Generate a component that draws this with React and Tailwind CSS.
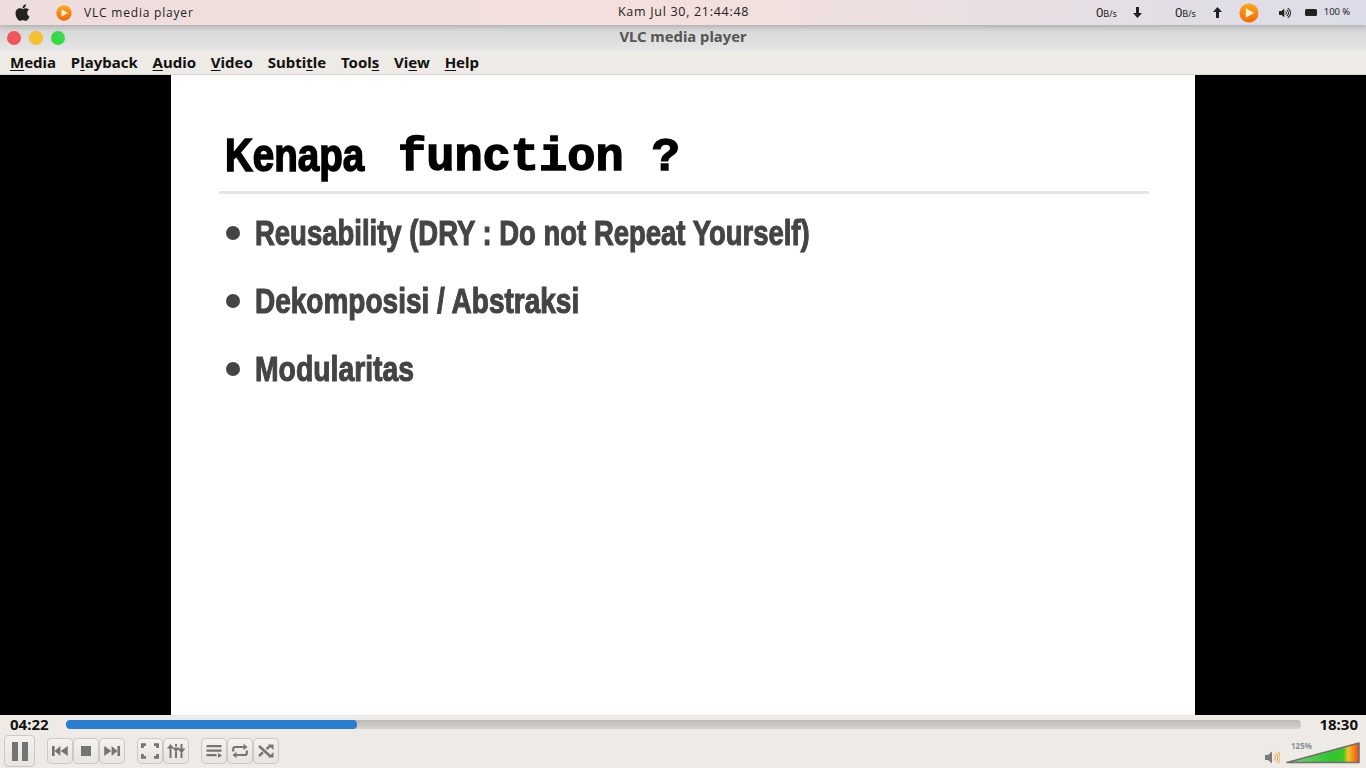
import React from "react";
import { FaApple, FaVolumeUp } from "react-icons/fa";

const sans = "[font-family:'Noto_Sans','Liberation_Sans',sans-serif]";

function PlayLogo({ size = 16 }) {
  return (
    <svg width={size} height={size} viewBox="0 0 20 20">
      <defs>
        <linearGradient id={"pl" + size} x1="0" y1="0" x2="0" y2="1">
          <stop offset="0" stopColor="#ffa81e" />
          <stop offset="1" stopColor="#f26a05" />
        </linearGradient>
      </defs>
      <circle cx="10" cy="10" r="9.6" fill={"url(#pl" + size + ")"} />
      <path d="M6.8 5.2 L15 10 L6.8 14.8 Z" fill="#fff3dc" />
    </svg>
  );
}

function Btn({ children, w = "w-[26px]", h = "h-[26px]" }) {
  return (
    <div className={`${w} ${h} shrink-0 flex items-center justify-center rounded-[4px] border border-[#cdc9c4] bg-gradient-to-b from-[#f4f2ee] to-[#e8e5e1]`}>
      {children}
    </div>
  );
}

const ic = { width: 18, height: 18, viewBox: "0 0 18 18", fill: "#747474", className: "blur-[0.3px]" };

const Prev = () => <svg {...ic}><path d="M1 4h2.6v10H1zM9.4 4v10L3.6 9zM16.8 4v10L9.6 9z" /></svg>;
const Stop = () => <svg {...ic}><rect x="4" y="4" width="10" height="10" /></svg>;
const Next = () => <svg {...ic}><path d="M14.4 4H17v10h-2.6zM8.6 4v10l5.8-5zM1.2 4v10L8.4 9z" /></svg>;
const Full = () => (
  <svg {...ic} fill="none" stroke="#747474" strokeWidth="2.8">
    <path d="M1.4 6v-3.4h3.6M13 2.6h3.6V6M16.6 12v3.4H13M5 15.4H1.4V12" />
  </svg>
);
const Ext = () => (
  <svg {...ic}>
    <path d="M2.5 6h2v10h-2zM8 2h2v2.5H8zM8 10h2v6H8zM13.5 2h2v5h-2zM13.5 11h2v5h-2zM0 6.5L3.5 2 7 6.5zM5.5 5.5h7L9 10.5zM10.5 6.5h8l-4 5z" />
  </svg>
);
const List = () => (
  <svg {...ic}>
    <path d="M1.5 3h15v2.2h-15zM1.5 7.5h15v2.2h-15zM1.5 12h10v2.2h-10zM13 11l4 2.5-4 2.5z" />
  </svg>
);
const Loop = () => (
  <svg {...ic} fill="none" stroke="#747474" strokeWidth="2.2">
    <path d="M2.2 9.5V7a2 2 0 0 1 2-2h8.5" />
    <path d="M15.8 8.5V11a2 2 0 0 1-2 2H5.3" />
    <path d="M12.5 1.8l4 3.2-4 3.2z" fill="#747474" stroke="none" />
    <path d="M5.5 9.8l-4 3.2 4 3.2z" fill="#747474" stroke="none" />
  </svg>
);
const Rand = () => (
  <svg {...ic} fill="none" stroke="#747474" strokeWidth="2.4">
    <path d="M2 4l11 10M2 14l4-3.6M9.5 7.2L13 4" />
    <path d="M16.5 2.5v5.5l-5.5-5.5zM16.5 15.5V10l-5.5 5.5z" fill="#747474" stroke="none" />
  </svg>
);

const ArrowD = () => <svg width="9" height="11" viewBox="0 0 9 11" fill="#222"><path d="M3 0h3v6h3L4.5 11 0 6h3z" /></svg>;
const ArrowU = () => <svg width="9" height="11" viewBox="0 0 9 11" fill="#222"><path d="M3 11h3V5h3L4.5 0 0 5h3z" /></svg>;

function Menu({ pre, u, post }) {
  return (
    <span className="text-[15px] font-bold leading-[20px] text-[#111]">
      {pre}<span className="underline underline-offset-2">{u}</span>{post}
    </span>
  );
}

function Bullet({ children, w }) {
  return (
    <div className="flex items-center h-[68px]">
      <div className="w-[14px] h-[14px] rounded-full bg-[#444] ml-[7px] mr-[15px] shrink-0 blur-[0.4px]" />
      <span className={`inline-block origin-left whitespace-nowrap text-[35px] font-bold text-[#444] [font-family:'Liberation_Sans',sans-serif] blur-[0.5px] [-webkit-text-stroke:1.1px_#444] ${w}`}>
        {children}
      </span>
    </div>
  );
}

export default function App() {
  return (
    <div className={`w-[1366px] h-[768px] overflow-hidden flex flex-col bg-[#eeebe6] ${sans}`}>
      {/* system bar */}
      <div className="h-[25px] shrink-0 flex items-center bg-gradient-to-r from-[#eedddd] via-[#f3e0dc] to-[#dcdde9] text-[#222] relative z-10 shadow-[0_2px_5px_rgba(0,0,0,0.18)]">
        <div className="w-[618px] shrink-0 flex items-center">
          <FaApple className="ml-[13px] text-[#222]" size={19} />
          <div className="ml-[24px]"><PlayLogo size={16} /></div>
          <span className="ml-[12px] text-[12px] tracking-[0.8px] [font-family:'Open_Sans',sans-serif]">VLC media player</span>
        </div>
        <div className="text-[12.5px] tracking-[0.7px] whitespace-nowrap [font-family:'Open_Sans',sans-serif]">Kam Jul 30, 21:44:48</div>
        <div className="flex-1 flex items-center justify-end pr-[16px] text-[#222]">
          <span className="text-[13px] whitespace-nowrap">0<span className="text-[9px]">B/s</span></span>
          <div className="ml-[16px]"><ArrowD /></div>
          <span className="ml-[33px] text-[13px] whitespace-nowrap">0<span className="text-[9px]">B/s</span></span>
          <div className="ml-[17px]"><ArrowU /></div>
          <div className="ml-[17px]"><PlayLogo size={20} /></div>
          <FaVolumeUp size={12} className="ml-[20px]" />
          <div className="ml-[14px] w-[12px] h-[7px] bg-[#222] rounded-[1.5px]" />
          <span className="ml-[7px] text-[9.5px] tracking-[-0.1px] whitespace-nowrap">100 %</span>
        </div>
      </div>
      {/* title bar */}
      <div className="h-[26px] shrink-0 flex items-center relative bg-gradient-to-b from-[#d4d4d4] to-[#e6e6e6]">
        <div className="flex items-center gap-[8px] pl-[7px]">
          <div className="w-[14px] h-[14px] rounded-full bg-[#f2545b]" />
          <div className="w-[14px] h-[14px] rounded-full bg-[#f7c02f]" />
          <div className="w-[14px] h-[14px] rounded-full bg-[#35d94a]" />
        </div>
        <div className="absolute inset-0 pb-[3px] flex items-center justify-center text-[14.8px] font-bold text-[#555]">VLC media player</div>
      </div>
      {/* menu bar */}
      <div className="h-[24px] shrink-0 flex items-center gap-[14.8px] pl-[10px] pb-[2px] bg-[#eeebe6] border-b border-[#d9d6d1]">
        <Menu pre="" u="M" post="edia" />
        <Menu pre="P" u="l" post="ayback" />
        <Menu pre="" u="A" post="udio" />
        <Menu pre="" u="V" post="ideo" />
        <Menu pre="Subti" u="t" post="le" />
        <Menu pre="Tool" u="s" post="" />
        <Menu pre="Vi" u="e" post="w" />
        <Menu pre="" u="H" post="elp" />
      </div>
      {/* video */}
      <div className="h-[640px] shrink-0 bg-black flex justify-center">
        <div className="w-[1024px] h-full bg-white flex flex-col pl-[48px] pr-[46px] pt-[50px]">
          <div className="h-[66px] flex items-end pb-[6px] pl-[6px] text-black whitespace-nowrap blur-[0.4px]">
            <span className="inline-block origin-left scale-x-[0.82] mb-[2px] w-[140px] text-[47px] leading-[56px] font-bold [font-family:'Liberation_Sans',sans-serif] [-webkit-text-stroke:1.6px_#000]">Kenapa</span>
            <span className="ml-[33px] -mb-[1px] text-[47px] leading-[56px] font-bold [font-family:'Liberation_Mono',monospace] [-webkit-text-stroke:1.4px_#000]">function ?</span>
          </div>
          <div className="h-[3px] bg-[#e4e4e4]" />
          <div className="mt-[5px]">
            <Bullet w="scale-x-[0.785]">Reusability (DRY : Do not Repeat Yourself)</Bullet>
            <Bullet w="scale-x-[0.8]">Dekomposisi / Abstraksi</Bullet>
            <Bullet w="scale-x-[0.81]">Modularitas</Bullet>
          </div>
        </div>
      </div>
      {/* controls */}
      <div className="flex-1 flex flex-col bg-[#eeebe6]">
        <div className="h-[20px] flex items-center pl-[10px] pr-[8px] pb-[2px]">
          <span className="w-[56px] text-[15px] font-bold text-[#111]">04:22</span>
          <div className="w-[1235px] h-[9px] rounded-[4px] bg-gradient-to-b from-[#bdbab5] to-[#d6d3ce] overflow-hidden">
            <div className="w-[291px] h-full rounded-[4px] bg-[#2b7cd3]" />
          </div>
          <span className="ml-auto text-[15px] font-bold text-[#111]">18:30</span>
        </div>
        <div className="flex-1 flex items-center pl-[4px] pr-[6px] pb-[1px]">
          <Btn w="w-[31px]" h="h-[32px]">
            <svg width="16" height="19" viewBox="0 0 16 19" fill="#747474"><rect x="0" y="0" width="6" height="19" /><rect x="10" y="0" width="6" height="19" /></svg>
          </Btn>
          <div className="flex ml-[12px]"><Btn><Prev /></Btn><Btn><Stop /></Btn><Btn><Next /></Btn></div>
          <div className="flex ml-[12px]"><Btn><Full /></Btn><Btn><Ext /></Btn></div>
          <div className="flex ml-[12px]"><Btn><List /></Btn><Btn><Loop /></Btn><Btn><Rand /></Btn></div>
          <div className="ml-auto flex items-end self-end pb-[3px]">
            <svg width="15" height="13" viewBox="0 0 15 13">
              <path d="M0 4h3l4-3.5v12L3 9H0z" fill="#7a7a7a" />
              <path d="M9 3.5a4 4 0 0 1 0 6M11 2a6.5 6.5 0 0 1 0 9M13 .5a9 9 0 0 1 0 12" fill="none" stroke="#f29a2e" strokeWidth="1" />
            </svg>
            <div className="relative ml-[6px] w-[74px] h-[22px]">
              <svg width="74" height="22" viewBox="0 0 74 22" className="block">
                <defs>
                  <linearGradient id="vol" x1="0" y1="0" x2="1" y2="0">
                    <stop offset="0" stopColor="#7ed07a" />
                    <stop offset="0.6" stopColor="#2fc52f" />
                    <stop offset="0.78" stopColor="#3cc42c" />
                    <stop offset="0.85" stopColor="#f5c21f" />
                    <stop offset="1" stopColor="#f0481a" />
                  </linearGradient>
                </defs>
                <path d="M1 20.5 L73 1 V20.5 Z" fill="url(#vol)" stroke="#6e6e6e" strokeWidth="1.5" strokeLinejoin="round" />
              </svg>
              <span className="absolute left-[5px] top-[-2px] text-[8px] font-bold text-[#8a8f99]">125%</span>
            </div>
          </div>
        </div>
      </div>
    </div>
  );
}
